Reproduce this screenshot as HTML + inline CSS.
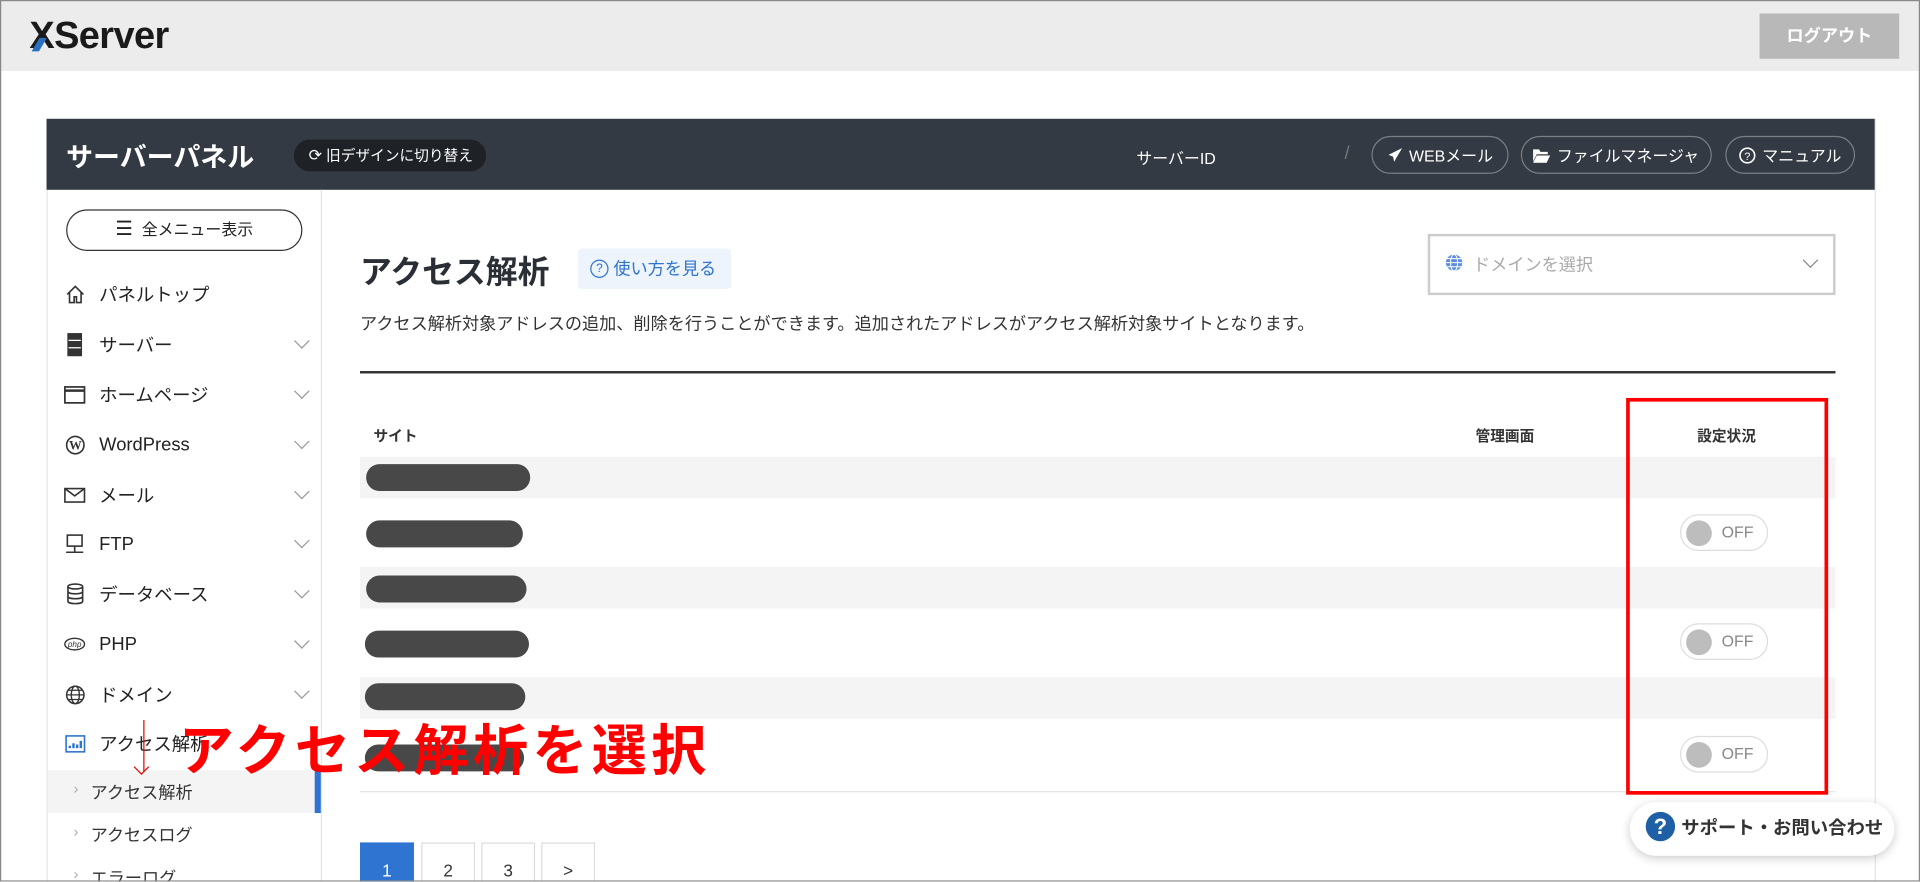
<!DOCTYPE html>
<html><head><meta charset="utf-8"><style>
html,body{margin:0;padding:0;width:1920px;height:882px;overflow:hidden;background:#fff}
#w{position:absolute;left:0;top:0;width:1568px;height:720px;transform:scale(1.22449);transform-origin:0 0;font-family:"Liberation Sans","Noto Sans CJK JP",sans-serif;color:#333;overflow:hidden}
.a{position:absolute}
.btn{position:absolute;top:111px;height:31px;border:1px solid #7a7e85;border-radius:16px;box-sizing:border-box;color:#fff;font-size:13px;display:flex;align-items:center;justify-content:center;gap:5px}
.mi{position:absolute;left:52px;width:205px;height:24px;display:flex;align-items:center;font-size:15px;color:#222}
.mi .ic{width:18px;height:18px;margin-right:11px;display:flex;align-items:center;justify-content:center}
.mi .ch{position:absolute;right:6px;top:5px;width:8px;height:8px;border-right:1px solid #999;border-bottom:1px solid #999;transform:rotate(45deg)}
.blob{position:absolute;height:22px;background:#484848;border-radius:11px}
.tg{position:absolute;left:1372px;width:72px;height:30px;border:1px solid #ddd;border-radius:15px;box-sizing:border-box}
.tg:before{content:"";position:absolute;left:4px;top:4px;width:21px;height:21px;border-radius:50%;background:#bdbdbd}
.tg span{position:absolute;left:33px;top:6px;font-size:13px;color:#888}
.pg{position:absolute;top:688px;width:44px;height:40px;border:1px solid #ddd;box-sizing:border-box;text-align:center;font-size:14px;line-height:44px;color:#333}
.stripe{position:absolute;left:294px;width:1205px;background:#f4f4f4}
</style></head><body><div id="w">
<div class="a" style="left:0;top:0;width:1568px;height:58px;background:#ececec"></div>
<div class="a" style="left:24px;top:11px;font-size:31px;font-weight:bold;letter-spacing:-0.5px;color:#1a1a1a">XServer</div>
<div class="a" style="left:29px;top:31px;width:6px;height:11px;background:#2a6fc0;transform:skewX(-30deg)"></div>
<div class="a" style="left:1437px;top:11px;width:114px;height:37px;background:#b8b8b8;color:#fff;font-weight:bold;font-size:14px;text-align:center;line-height:37px">ログアウト</div>

<div class="a" style="left:38px;top:97px;width:1492px;height:640px;border-left:1px solid #e5e5e5;border-right:1px solid #e5e5e5"></div>
<div class="a" style="left:38px;top:97px;width:1493px;height:58px;background:#343a43"></div>
<div class="a" style="left:54px;top:111px;font-size:22px;font-weight:bold;color:#fff">サーバーパネル</div>
<div class="a" style="left:240px;top:114px;width:157px;height:26px;border-radius:13px;background:#1e2126;color:#fff;font-size:12px;line-height:26px"><span style="margin-left:12px;font-size:13px">⟳</span> 旧デザインに切り替え</div>
<div class="a" style="left:928px;top:119px;font-size:13px;color:#fff">サーバーID</div>
<div class="a" style="left:1098px;top:117px;font-size:15px;color:#777">/</div>
<div class="btn" style="left:1120px;width:112px"><svg width="13" height="13" viewBox="0 0 14 14"><path d="M13 1L1 7l4 1.5L6 13l2-3.5L13 1z" fill="#fff"/></svg>WEBメール</div>
<div class="btn" style="left:1242px;width:156px"><svg width="14" height="12" viewBox="0 0 14 12"><path d="M0 1h5l1 2h6v2H3L0 11z M3 6h11l-3 6H0z" fill="#fff"/></svg>ファイルマネージャ</div>
<div class="btn" style="left:1409px;width:106px"><svg width="14" height="14" viewBox="0 0 14 14"><circle cx="7" cy="7" r="6" fill="none" stroke="#fff" stroke-width="1.3"/><text x="7" y="10.5" font-size="9" text-anchor="middle" fill="#fff" font-family="Liberation Sans">?</text></svg>マニュアル</div>

<div class="a" style="left:262px;top:155px;width:1px;height:570px;background:#e5e5e5"></div>
<div class="a" style="left:54px;top:171px;width:193px;height:34px;border:1px solid #333;border-radius:17px;box-sizing:border-box;font-size:13px;text-align:center;line-height:32px;color:#222"><span style="font-size:16px">☰</span>&nbsp; 全メニュー表示</div>

<div class="mi" style="top:228px"><div class="ic"><svg width="17" height="17" viewBox="0 0 18 18"><path d="M2 9L9 2l7 7M4 7v9h4v-5h2v5h4V7" fill="none" stroke="#333" stroke-width="1.4"/></svg></div>パネルトップ</div>
<div class="mi" style="top:269px"><div class="ic"><svg width="14" height="19" viewBox="0 0 14 19"><rect x="1" y="0" width="12" height="19" fill="#333"/><path d="M2 6h10M2 12h10" stroke="#fff"/></svg></div>サーバー<i class="ch"></i></div>
<div class="mi" style="top:310px"><div class="ic"><svg width="18" height="15" viewBox="0 0 18 15"><rect x="1" y="1" width="16" height="13" fill="none" stroke="#333" stroke-width="1.4"/><path d="M1 4h16" stroke="#333" stroke-width="2"/></svg></div>ホームページ<i class="ch"></i></div>
<div class="mi" style="top:351px"><div class="ic"><svg width="17" height="17" viewBox="0 0 18 18"><circle cx="9" cy="9" r="7.5" fill="none" stroke="#333" stroke-width="1.4"/><text x="9" y="13" font-size="11" font-weight="bold" text-anchor="middle" fill="#333" font-family="Liberation Serif">W</text></svg></div>WordPress<i class="ch"></i></div>
<div class="mi" style="top:392px"><div class="ic"><svg width="18" height="13" viewBox="0 0 18 13"><rect x="1" y="1" width="16" height="11" fill="none" stroke="#333" stroke-width="1.3"/><path d="M1 1l8 6 8-6" fill="none" stroke="#333" stroke-width="1.3"/></svg></div>メール<i class="ch"></i></div>
<div class="mi" style="top:432px"><div class="ic"><svg width="16" height="17" viewBox="0 0 16 17"><rect x="2" y="1" width="12" height="9" fill="none" stroke="#333" stroke-width="1.3"/><path d="M8 10v5M1 15h14" stroke="#333" stroke-width="1.3"/></svg></div>FTP<i class="ch"></i></div>
<div class="mi" style="top:473px"><div class="ic"><svg width="15" height="18" viewBox="0 0 15 18"><ellipse cx="7.5" cy="3" rx="6" ry="2" fill="none" stroke="#333" stroke-width="1.3"/><path d="M1.5 3v12c0 2.6 12 2.6 12 0V3M1.5 7c0 2.6 12 2.6 12 0M1.5 11c0 2.6 12 2.6 12 0" fill="none" stroke="#333" stroke-width="1.3"/></svg></div>データベース<i class="ch"></i></div>
<div class="mi" style="top:514px"><div class="ic"><svg width="19" height="12" viewBox="0 0 19 12"><ellipse cx="9.5" cy="6" rx="8.5" ry="5" fill="none" stroke="#333" stroke-width="1.2"/><text x="9.5" y="8.5" font-size="7" font-style="italic" text-anchor="middle" fill="#333" font-family="Liberation Sans">php</text></svg></div>PHP<i class="ch"></i></div>
<div class="mi" style="top:555px"><div class="ic"><svg width="17" height="17" viewBox="0 0 18 18"><circle cx="9" cy="9" r="7.5" fill="none" stroke="#333" stroke-width="1.3"/><ellipse cx="9" cy="9" rx="3.5" ry="7.5" fill="none" stroke="#333" stroke-width="1.2"/><path d="M1.5 9h15M3 5h12M3 13h12" stroke="#333" stroke-width="1.1"/></svg></div>ドメイン<i class="ch"></i></div>
<div class="mi" style="top:595px"><div class="ic"><svg width="17" height="15" viewBox="0 0 17 15"><rect x="1" y="1" width="15" height="13" fill="none" stroke="#2f74d0" stroke-width="1.3"/><path d="M4 11V9M7 11V7M10 11V8M13 11V5" stroke="#2f74d0" stroke-width="2"/></svg></div>アクセス解析</div>
<div class="a" style="left:39px;top:629px;width:223px;height:35px;background:#f4f4f4"></div>
<div class="a" style="left:257px;top:629px;width:5px;height:35px;background:#2f74d0"></div>
<div class="a" style="left:60px;top:637px;font-size:12px;color:#aaa">›</div>
<div class="a" style="left:74px;top:637px;font-size:14px;color:#333">アクセス解析</div>
<div class="a" style="left:60px;top:672px;font-size:12px;color:#aaa">›</div>
<div class="a" style="left:74px;top:672px;font-size:14px;color:#333">アクセスログ</div>
<div class="a" style="left:60px;top:707px;font-size:12px;color:#aaa">›</div>
<div class="a" style="left:74px;top:707px;font-size:14px;color:#333">エラーログ</div>

<div class="a" style="left:294px;top:202px;font-size:26px;font-weight:bold;color:#2a2f36">アクセス解析</div>
<div class="a" style="left:472px;top:203px;width:125px;height:33px;background:#eef4fc;border-radius:3px;color:#2f74d0;font-size:14px;line-height:33px"><span style="display:inline-block;margin-left:10px;width:13px;height:13px;border:1.5px solid #2f74d0;border-radius:50%;font-size:10px;line-height:13px;text-align:center;vertical-align:middle;position:relative;top:-1px">?</span> 使い方を見る</div>
<div class="a" style="left:1166px;top:191px;width:333px;height:50px;border:2px solid #ccc;box-sizing:border-box"></div>
<div class="a" style="left:1180px;top:207px"><svg width="15" height="15" viewBox="0 0 18 18"><circle cx="9" cy="9" r="8" fill="#5d8fe0"/><ellipse cx="9" cy="9" rx="3.5" ry="8" fill="none" stroke="#fff" stroke-width="1"/><path d="M1 9h16M2 5h14M2 13h14" stroke="#fff"/></svg></div>
<div class="a" style="left:1203px;top:206px;font-size:14px;color:#aaa">ドメインを選択</div>
<div class="a" style="left:1474px;top:208px;width:8px;height:8px;border-right:1.5px solid #888;border-bottom:1.5px solid #888;transform:rotate(45deg)"></div>
<div class="a" style="left:294px;top:254px;font-size:14px;color:#333">アクセス解析対象アドレスの追加、削除を行うことができます。追加されたアドレスがアクセス解析対象サイトとなります。</div>
<div class="a" style="left:294px;top:303px;width:1205px;height:2px;background:#333"></div>

<div class="a" style="left:305px;top:347px;font-size:12px;font-weight:bold;color:#333">サイト</div>
<div class="a" style="left:1205px;top:347px;font-size:12px;font-weight:bold;color:#333">管理画面</div>
<div class="a" style="left:1386px;top:347px;font-size:12px;font-weight:bold;color:#333">設定状況</div>
<div class="stripe" style="top:373px;height:34px"></div>
<div class="stripe" style="top:463px;height:34px"></div>
<div class="stripe" style="top:553px;height:34px"></div>
<div class="a" style="left:294px;top:646px;width:1205px;height:1px;background:#e5e5e5"></div>
<div class="blob" style="left:299px;top:379px;width:134px"></div>
<div class="blob" style="left:299px;top:425px;width:128px"></div>
<div class="blob" style="left:299px;top:470px;width:131px"></div>
<div class="blob" style="left:298px;top:515px;width:134px"></div>
<div class="blob" style="left:298px;top:558px;width:131px"></div>
<div class="blob" style="left:298px;top:608px;width:130px"></div>
<div class="tg" style="top:420px"><span>OFF</span></div>
<div class="tg" style="top:509px"><span>OFF</span></div>
<div class="tg" style="top:601px"><span>OFF</span></div>
<div class="a" style="left:1328px;top:325px;width:165px;height:324px;border:3px solid #f00;box-sizing:border-box"></div>

<div class="pg" style="left:294px;background:#2f74d0;border-color:#2f74d0;color:#fff">1</div>
<div class="pg" style="left:344px">2</div>
<div class="pg" style="left:393px">3</div>
<div class="pg" style="left:442px">&gt;</div>

<div class="a" style="left:1331px;top:655px;width:216px;height:44px;background:#fff;border-radius:22px;box-shadow:0 2px 8px rgba(0,0,0,.2)"></div>
<div class="a" style="left:1344px;top:663px;width:24px;height:24px;border-radius:50%;background:#1e5fa6;color:#fff;font-weight:bold;font-size:18px;text-align:center;line-height:24px">?</div>
<div class="a" style="left:1373px;top:665px;font-size:15px;font-weight:bold;color:#333">サポート・お問い合わせ</div>

<div class="a" style="left:146px;top:577px;font-size:45px;font-weight:bold;color:#f00;white-space:nowrap;letter-spacing:3.5px">アクセス解析を選択</div>
<div class="a" style="left:117px;top:588px;width:1px;height:42px;background:#e00"></div>
<div class="a" style="left:111px;top:622px;width:8px;height:8px;border-right:1px solid #e00;border-bottom:1px solid #e00;transform:rotate(45deg)"></div>
<div class="a" style="left:0;top:0;width:1568px;height:720px;border:1px solid #888;box-sizing:border-box"></div>
</div></body></html>
